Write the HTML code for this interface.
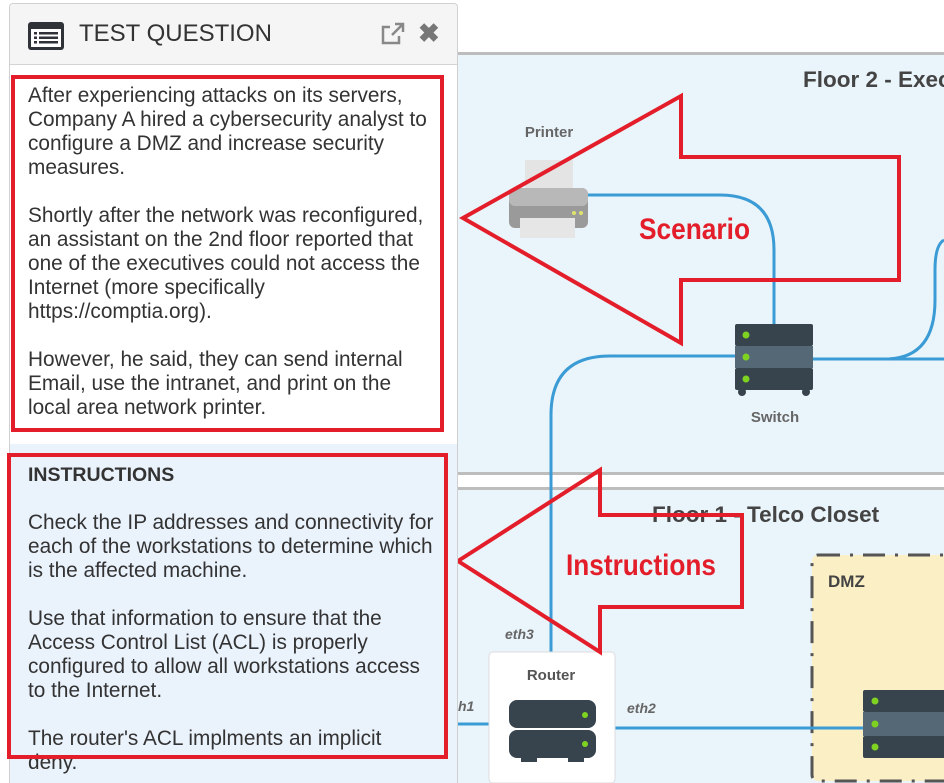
<!DOCTYPE html>
<html><head><meta charset="utf-8"><style>
body{margin:0;width:944px;height:783px;overflow:hidden;background:#fff;font-family:"Liberation Sans",sans-serif;position:relative}
.abs{position:absolute}
#panel{left:9px;top:3px;width:447px;height:779px;border:1px solid #d0d0d0;border-bottom:none;border-radius:4px 4px 0 0;background:#fff;overflow:hidden}
#hdr{left:0;top:0;width:447px;height:60px;background:#f5f5f5;border-bottom:1px solid #d4d4d4}
.txt{font-size:20.8px;line-height:24px;color:#333;white-space:nowrap}
</style></head><body>
<svg class="abs" style="left:0;top:0" width="944" height="783">
<rect x="457" y="54" width="487" height="420" fill="#eaf4fb"/>
<rect x="457" y="52" width="487" height="3" fill="#bdbdbd"/>
<rect x="457" y="472" width="487" height="3" fill="#bdbdbd"/>
<rect x="457" y="487" width="487" height="3" fill="#bdbdbd"/>
<rect x="457" y="490" width="487" height="293" fill="#eaf4fb"/>
<rect x="812" y="555" width="140" height="226" rx="6" fill="#faefc5" stroke="#555" stroke-width="3" stroke-dasharray="22,10,3,10"/>
<text x="828" y="587" font-family="Liberation Sans" font-weight="bold" font-size="17" fill="#444">DMZ</text>
<text x="803" y="87" font-family="Liberation Sans" font-weight="bold" font-size="22.5" fill="#444">Floor 2 - Executive</text>
<text x="652" y="522" font-family="Liberation Sans" font-weight="bold" font-size="22.5" fill="#444">Floor 1 - Telco Closet</text>
<g fill="none" stroke="#3a9bd5" stroke-width="3">
<path d="M588 195 H720 Q774 195 774 250 V325"/>
<path d="M735 356 H610 Q551 356 551 415 V652"/>
<path d="M813 359 H944"/>
<path d="M885 359 Q935 359 935 300 V270 Q935 245 944 240"/>
<path d="M458 724 H489"/>
<path d="M615 728 H865"/>
</g>
<text x="549" y="137" text-anchor="middle" font-family="Liberation Sans" font-weight="bold" font-size="15" fill="#666">Printer</text>
<g>
<rect x="525" y="160" width="48" height="40" fill="#e4e4e4"/>
<rect x="509" y="188" width="79" height="40" rx="6" fill="#9a9a9a"/>
<rect x="509" y="188" width="79" height="18" rx="6" fill="#b8b8b8"/>
<rect x="520" y="218" width="55" height="20" fill="#e6e6e6"/>
<circle cx="574" cy="213" r="2" fill="#dfe36a"/><circle cx="581" cy="213" r="2" fill="#dfe36a"/>
</g>
<text x="775" y="422" text-anchor="middle" font-family="Liberation Sans" font-weight="bold" font-size="15" fill="#666">Switch</text>
<g>
<rect x="735" y="324" width="78" height="22" rx="2" fill="#37434d"/>
<rect x="735" y="346" width="78" height="22" fill="#556875"/>
<rect x="735" y="368" width="78" height="22" rx="2" fill="#37434d"/>
<circle cx="746" cy="335" r="3.5" fill="#7ed321"/><circle cx="746" cy="357" r="3.5" fill="#7ed321"/><circle cx="746" cy="379" r="3.5" fill="#7ed321"/>
<circle cx="742" cy="392" r="4" fill="#37434d"/><circle cx="806" cy="392" r="4" fill="#37434d"/>
</g>
<g>
<rect x="863" y="690" width="90" height="22" rx="2" fill="#37434d"/>
<rect x="863" y="712" width="90" height="24" fill="#556875"/>
<rect x="863" y="736" width="90" height="22" rx="2" fill="#37434d"/>
<circle cx="875" cy="701" r="3.5" fill="#7ed321"/><circle cx="875" cy="724" r="3.5" fill="#7ed321"/><circle cx="875" cy="747" r="3.5" fill="#7ed321"/>
</g>
<rect x="489" y="652" width="126" height="131" rx="4" fill="#fff" stroke="#ddd"/>
<text x="551" y="680" text-anchor="middle" font-family="Liberation Sans" font-weight="bold" font-size="15" fill="#555">Router</text>
<g>
<rect x="509" y="700" width="87" height="28" rx="8" fill="#37434d"/>
<rect x="509" y="730" width="87" height="28" rx="8" fill="#37434d"/>
<rect x="521" y="756" width="16" height="6" fill="#37434d"/><rect x="568" y="756" width="16" height="6" fill="#37434d"/>
<circle cx="585" cy="715" r="3" fill="#7ed321"/><circle cx="585" cy="744" r="3" fill="#7ed321"/>
</g>
<g font-family="Liberation Sans" font-style="italic" font-weight="bold" font-size="14" fill="#666">
<text x="505" y="639">eth3</text><text x="627" y="713">eth2</text><text x="458" y="711">h1</text>
</g>
<g fill="none" stroke="#e31e2a" stroke-width="4">
<polygon points="463,218 681,96 681,157 899,157 899,280 681,280 681,343"/>
<polygon points="458,561 600,470 600,515 742,515 742,607 600,607 600,652"/>
</g>
<g font-family="Liberation Sans" font-weight="bold" fill="#e31e2a">
<text x="639" y="239" font-size="30" textLength="111" lengthAdjust="spacingAndGlyphs">Scenario</text>
<text x="566" y="575" font-size="30" textLength="150" lengthAdjust="spacingAndGlyphs">Instructions</text>
</g>
</svg>
<div id="panel" class="abs">
<div id="hdr" class="abs">
<svg class="abs" style="left:18px;top:18px" width="36" height="28"><rect x="0" y="0" width="36" height="28" rx="3" fill="#2f3338"/><rect x="3" y="7" width="30" height="18" fill="#fff"/><g fill="#2f3338"><rect x="6" y="10" width="3" height="2.5"/><rect x="11" y="10" width="19" height="2.5"/><rect x="6" y="14.5" width="3" height="2.5"/><rect x="11" y="14.5" width="19" height="2.5"/><rect x="6" y="19" width="3" height="2.5"/><rect x="11" y="19" width="19" height="2.5"/></g></svg>
<div class="abs" style="left:69px;top:16px;font-size:24px;color:#333">TEST QUESTION</div>
<svg class="abs" style="left:370px;top:18px" width="26" height="24"><path d="M10 5H3v16h16v-7" fill="none" stroke="#888" stroke-width="2.5"/><path d="M12 13L22 3M15 2h8v8" fill="none" stroke="#888" stroke-width="2.5"/></svg>
<div class="abs" style="left:408px;top:14px;font-size:26px;font-weight:bold;color:#777">✖</div>
</div>
<div class="abs" style="left:0;top:440px;width:447px;height:339px;background:#eaf2fc"></div>
<div class="abs txt" style="left:18px;top:80px">After experiencing attacks on its servers,<br>Company A hired a cybersecurity analyst to<br>configure a DMZ and increase security<br>measures.<br><br>Shortly after the network was reconfigured,<br>an assistant on the 2nd floor reported that<br>one of the executives could not access the<br>Internet (more specifically<br>https://comptia.org).<br><br>However, he said, they can send internal<br>Email, use the intranet, and print on the<br>local area network printer.</div>
<div class="abs txt" style="left:18px;top:459px"><b style="font-size:19.5px">INSTRUCTIONS</b><br><br>Check the IP addresses and connectivity for<br>each of the workstations to determine which<br>is the affected machine.<br><br>Use that information to ensure that the<br>Access Control List (ACL) is properly<br>configured to allow all workstations access<br>to the Internet.<br><br>The router's ACL implments an implicit<br>deny.</div>
</div>
<div class="abs" style="left:11px;top:75px;width:425px;height:349px;border:4px solid #e31e2a"></div>
<div class="abs" style="left:7px;top:453px;width:433px;height:298px;border:4px solid #e31e2a"></div>
</body></html>
